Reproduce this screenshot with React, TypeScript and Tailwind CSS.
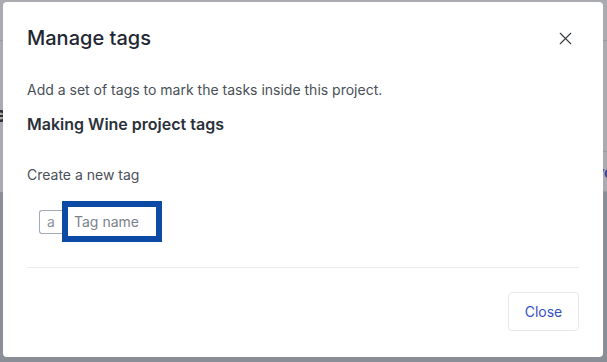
import { X } from "lucide-react";

export default function App() {
  return (
    <div className="relative h-[362px] w-[607px] overflow-hidden font-['Inter','Noto_Sans',sans-serif]">
      {/* page behind the overlay */}
      <div className="flex h-full flex-col">
        <div className="relative h-[192px] bg-[#a9abb0]">
          <div className="mt-[40px] h-px bg-[#9a9ca1]" />
          <span className="absolute left-[-6px] top-[98px] text-[22px] font-bold text-[#2a2d33]">e</span>
          <span className="absolute right-[-6px] top-[162px] text-[15px] font-semibold text-[#3b3f8f]">ve</span>
          <div className="absolute bottom-0 right-0 h-px w-[10px] bg-[#9a9ca1]" />
          <div className="absolute right-0 top-[151px] h-px w-[10px] bg-[#9a9ca1]" />
        </div>
        <div className="flex-1 bg-[#898e97]" />
      </div>

      {/* modal */}
      <div className="absolute left-[3px] top-[2px] flex h-[355px] w-[600px] flex-col rounded-[4px] bg-white px-[24px] text-[#212529]">
        <div className="flex h-[52px] items-end justify-between pb-[2px]">
          <h2 className="text-[20px] font-medium leading-[28px] text-[#1f2733]">Manage tags</h2>
          <button className="mb-[3px] mr-[3px] text-[#343a40]">
            <X size={21} strokeWidth={1.3} />
          </button>
        </div>
        <p className="mt-[26px] text-[14px] leading-[20px] text-[#495057]">
          Add a set of tags to mark the tasks inside this project.
        </p>
        <h3 className="mt-[12px] text-[16px] font-semibold leading-[24px] text-[#2b313a]">
          Making Wine project tags
        </h3>
        <p className="mt-[29px] text-[14px] leading-[20px] text-[#495057]">Create a new tag</p>
        <div className="ml-[12px] mt-[16px] flex items-center">
          <span className="flex h-[24px] w-[23px] items-center justify-center rounded-l-[3px] border border-r-0 border-[#a5abb3] text-[14px] text-[#8b9299]">
            a
          </span>
          <input
            placeholder="Tag name"
            className="h-[41px] w-[100px] border-[6px] border-[#0d4aa6] px-[6px] text-[14px] text-[#495057] outline-none placeholder:text-[#7b828a]"
          />
        </div>
        <div className="mt-[25px] h-px bg-[#e9ecef]" />
        <div className="mt-[24px] flex justify-end">
          <button className="h-[39px] w-[71px] rounded-[4px] border border-[#e5e8eb] text-[14px] text-[#3451c4]">
            Close
          </button>
        </div>
      </div>
    </div>
  );
}
